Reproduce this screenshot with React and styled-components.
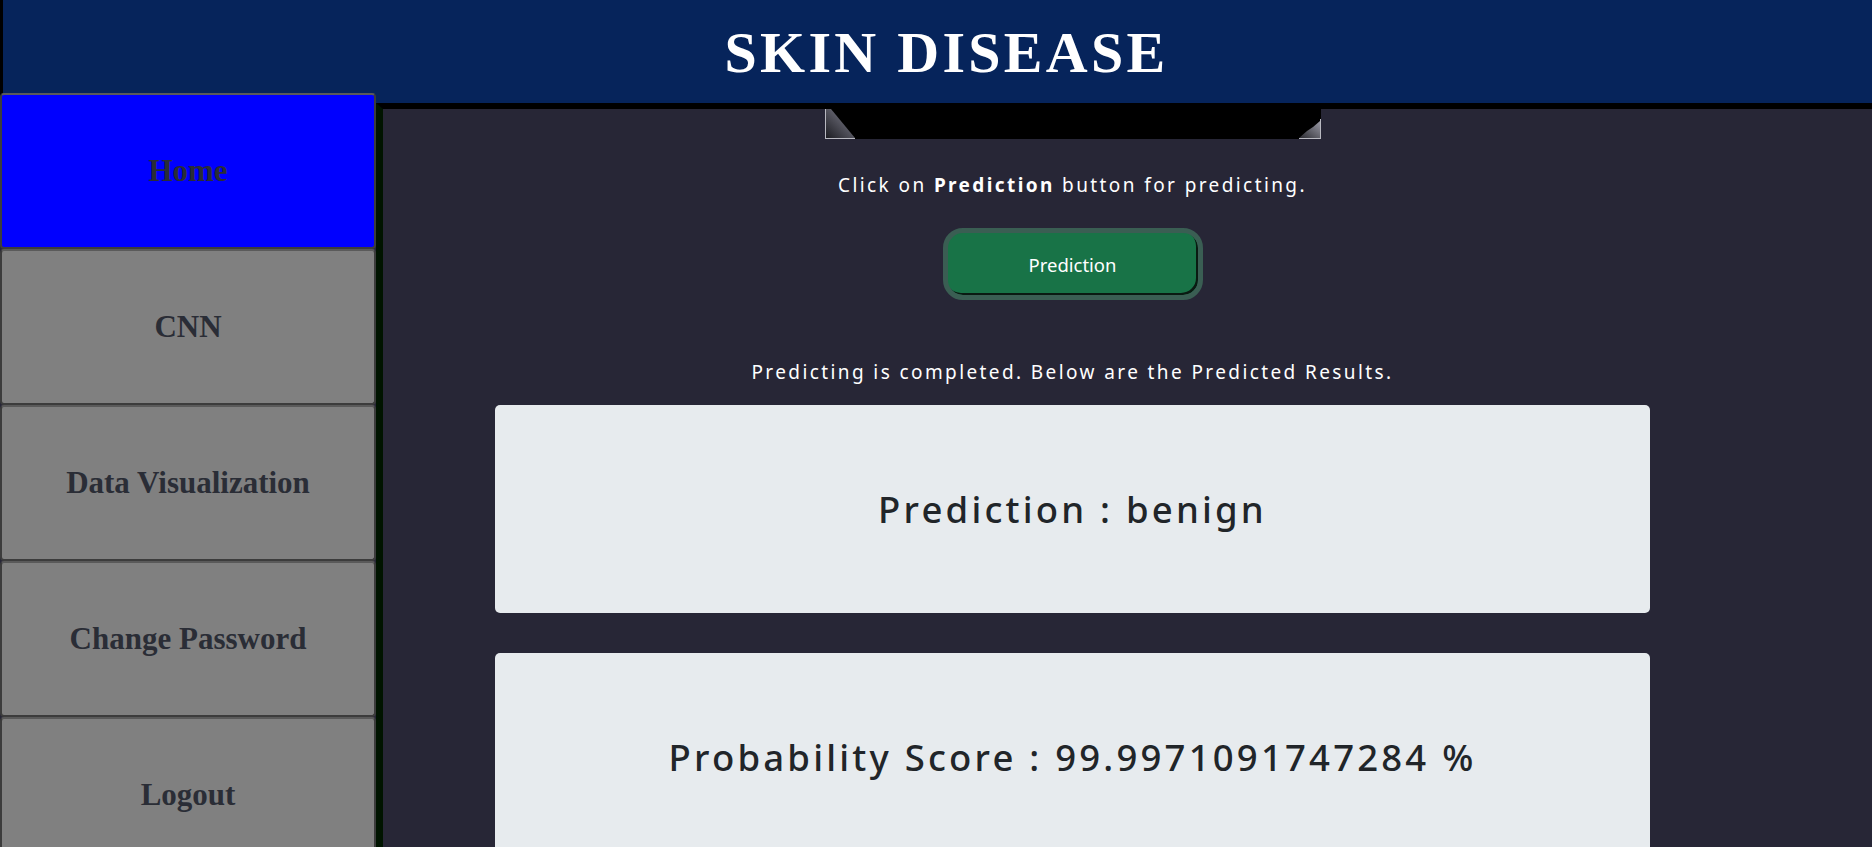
import React from "react";
import styled, { createGlobalStyle } from "styled-components";

const GlobalStyle = createGlobalStyle`
  html, body {
    margin: 0;
    padding: 0;
    background: #272636;
  }
  * {
    box-sizing: border-box;
  }
`;

const Page = styled.div`
  min-height: 847px;
  display: flex;
  flex-direction: column;
  overflow: hidden;
`;

const Header = styled.header`
  height: 103px;
  background: #06245b;
  border-left: 3px solid #000;
  display: flex;
  align-items: center;
  justify-content: center;
  padding-left: 18px;
`;

const Title = styled.h1`
  margin: 0;
  font-family: "Liberation Serif", "Times New Roman", serif;
  font-weight: bold;
  font-size: 58px;
  letter-spacing: 3.3px;
  color: #fff;
  line-height: 1;
  padding-top: 2px;
`;

const Body = styled.div`
  display: flex;
  flex: 1;
`;

const Sidebar = styled.nav`
  width: 376px;
  flex-shrink: 0;
  margin-top: -10px;
  display: flex;
  flex-direction: column;
  position: relative;
`;

const NavButton = styled.button`
  all: unset;
  box-sizing: border-box;
  height: 156px;
  width: 100%;
  display: flex;
  align-items: center;
  justify-content: center;
  background: ${(p) => (p.$active ? "#0000ff" : "#808080")};
  border: 2px solid #3c3c3c;
  border-top-color: #5a5a5a;
  border-radius: 4px;
  font-family: "Liberation Serif", "Times New Roman", serif;
  font-weight: bold;
  font-size: 31px;
  color: #2a2d36;
`;

const Main = styled.main`
  flex: 1;
  border-top: 6px solid #000;
  border-left: 7px solid #001400;
  padding: 0 222px 0 112px;
  display: flex;
  flex-direction: column;
  align-items: center;
`;

const Picture = styled.div`
  width: 496px;
  height: 30px;
  line-height: 0;
`;

const Note = styled.p`
  margin: ${(p) => p.$top}px 0 0;
  font-family: "Noto Sans", "Open Sans", sans-serif;
  font-size: 19px;
  line-height: 24px;
  letter-spacing: 2.4px;
  color: #fff;
  b {
    font-weight: bold;
  }
`;

const PredictButton = styled.button`
  all: unset;
  box-sizing: border-box;
  margin-top: 31px;
  width: 260px;
  height: 72px;
  border: 5px solid #3a5e53;
  border-radius: 20px;
  background: #187347;
  box-shadow: inset -2px -2px 0 #0a1a12;
  display: flex;
  align-items: center;
  justify-content: center;
  font-family: "Noto Sans", "Open Sans", sans-serif;
  font-size: 18.5px;
  color: #fff;
`;

const Card = styled.div`
  width: 100%;
  height: 208px;
  margin-top: ${(p) => p.$top}px;
  background: #e7ebee;
  border-radius: 5px;
  display: flex;
  align-items: center;
  justify-content: center;
  flex-shrink: 0;
`;

const CardText = styled.h2`
  margin: 0;
  font-family: "Noto Sans", "Open Sans", sans-serif;
  font-weight: 500;
  font-size: 36.5px;
  letter-spacing: 3.2px;
  color: #212529;
`;

const navItems = ["Home", "CNN", "Data Visualization", "Change Password", "Logout"];

const UploadedImage = () => (
  <Picture>
    <svg width="496" height="30" viewBox="0 0 496 30">
      <defs>
        <linearGradient id="cl" x1="0" y1="1" x2="1" y2="0">
          <stop offset="0" stopColor="#1c1c22" />
          <stop offset="1" stopColor="#8a8a98" />
        </linearGradient>
        <linearGradient id="cr" x1="0" y1="1" x2="1" y2="0">
          <stop offset="0" stopColor="#2a2a30" />
          <stop offset="1" stopColor="#9a9aa6" />
        </linearGradient>
      </defs>
      <rect x="0" y="0" width="496" height="30" fill="#000" />
      <polygon points="1,0 6,0 30,29 1,29" fill="url(#cl)" />
      <polygon points="495,12 495,29 474,29 482,22 488,18" fill="url(#cr)" />
      <line x1="0.5" y1="0" x2="0.5" y2="30" stroke="#b8b8c0" />
      <line x1="0" y1="29.5" x2="30" y2="29.5" stroke="#b8b8c0" />
      <line x1="474" y1="29.5" x2="496" y2="29.5" stroke="#b8b8c0" />
      <line x1="495.5" y1="10" x2="495.5" y2="30" stroke="#b8b8c0" />
    </svg>
  </Picture>
);

const App = () => {
  return (
    <Page>
      <GlobalStyle />
      <Header>
        <Title>SKIN DISEASE</Title>
      </Header>
      <Body>
        <Sidebar>
          {navItems.map((item, i) => (
            <NavButton key={item} $active={i === 0}>
              {item}
            </NavButton>
          ))}
        </Sidebar>
        <Main>
          <UploadedImage />
          <Note $top={34}>
            Click on <b>Prediction</b> button for predicting.
          </Note>
          <PredictButton>Prediction</PredictButton>
          <Note $top={60}>Predicting is completed. Below are the Predicted Results.</Note>
          <Card $top={21}>
            <CardText>Prediction : benign</CardText>
          </Card>
          <Card $top={40}>
            <CardText>Probability Score : 99.9971091747284 %</CardText>
          </Card>
        </Main>
      </Body>
    </Page>
  );
};

export default App;
